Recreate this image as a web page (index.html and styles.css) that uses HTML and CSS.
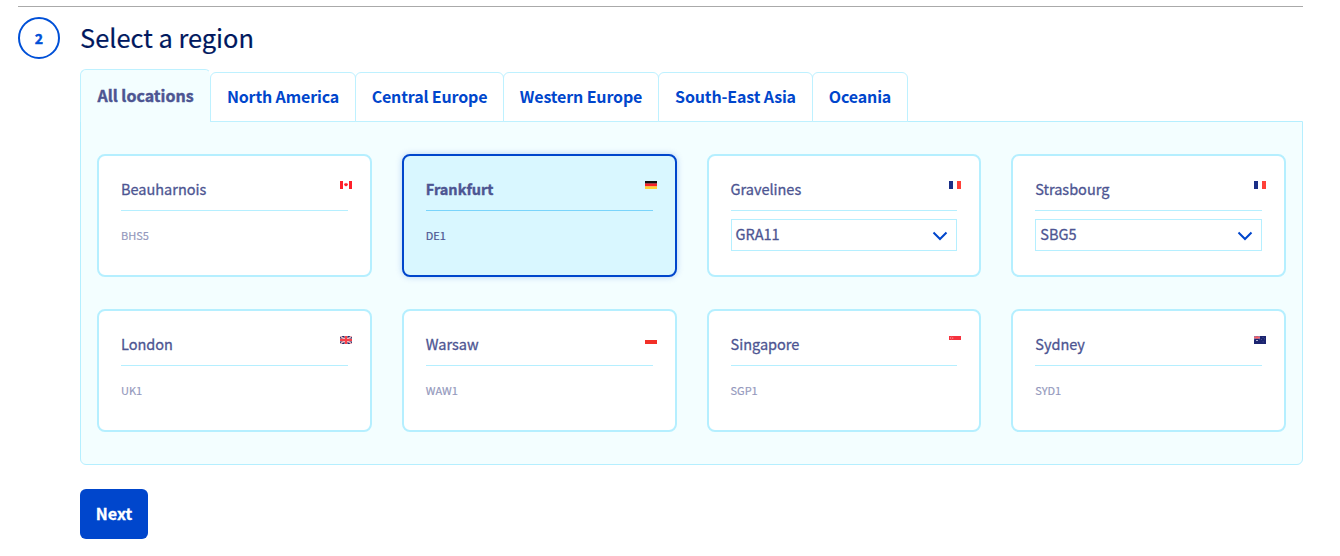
FILE: index.html
```
<!DOCTYPE html>
<html lang="en">
<head>
<meta charset="utf-8">
<title>Select a region</title>
<link rel="stylesheet" href="styles.css">
</head>
<body>
<main class="step">
  <div class="step-number">2</div>
  <section class="step-body">
    <h2 class="title"><span>Select a region</span></h2>
    <nav class="tabs">
      <a class="tab tab-all active"><span>All locations</span></a>
      <a class="tab tab-na"><span>North America</span></a>
      <a class="tab tab-ce"><span>Central Europe</span></a>
      <a class="tab tab-we"><span>Western Europe</span></a>
      <a class="tab tab-sea"><span>South-East Asia</span></a>
      <a class="tab tab-oc"><span>Oceania</span></a>
    </nav>
    <div class="panel">
      <article class="card">
        <header class="card-head"><span class="name">Beauharnois</span>
          <svg class="flag" viewBox="0 0 12 8"><path fill="#fff" d="M0 0h12v8H0z"/><path fill="#ff1f2a" d="M0 0h3v8H0zM9 0h3v8H9zM6 1.800l.7.8 1.300.1-.3 1.500-1.300 1h-.8l-1.300-1L4 2.700l1.300-.1z"/></svg>
        </header>
        <p class="code">BHS5</p>
      </article>
      <article class="card selected">
        <header class="card-head"><span class="name">Frankfurt</span>
          <svg class="flag" viewBox="0 0 12 8"><path fill="#111" d="M0 0h12v2.700H0z"/><path fill="#f8212b" d="M0 2.500h12v3H0z"/><path fill="#ffd034" d="M0 5.300h12V8H0z"/></svg>
        </header>
        <p class="code">DE1</p>
      </article>
      <article class="card">
        <header class="card-head"><span class="name">Gravelines</span>
          <svg class="flag" viewBox="0 0 12 8"><path fill="#fff" d="M0 0h12v8H0z"/><path fill="#1b2f87" d="M0 0h4v8H0z"/><path fill="#ff4038" d="M8 0h4v8H8z"/></svg>
        </header>
        <div class="select"><span>GRA11</span><svg class="chevron" viewBox="0 0 16 10"><path d="M1.500 1.500 8 8l6.500-6.500"/></svg></div>
      </article>
      <article class="card">
        <header class="card-head"><span class="name">Strasbourg</span>
          <svg class="flag" viewBox="0 0 12 8"><path fill="#fff" d="M0 0h12v8H0z"/><path fill="#1b2f87" d="M0 0h4v8H0z"/><path fill="#ff4038" d="M8 0h4v8H8z"/></svg>
        </header>
        <div class="select"><span>SBG5</span><svg class="chevron" viewBox="0 0 16 10"><path d="M1.500 1.500 8 8l6.500-6.500"/></svg></div>
      </article>
      <article class="card">
        <header class="card-head"><span class="name">London</span>
          <svg class="flag" viewBox="0 0 12 8"><path fill="#1b2a68" d="M0 0h12v8H0z"/><path stroke="#fff" stroke-width="1.300" d="m0 0 12 8M12 0 0 8"/><path stroke="#f0444e" stroke-width=".5" d="m0 0 12 8M12 0 0 8"/><path stroke="#fbb" stroke-width="3" d="M6 0v8M0 4h12"/><path stroke="#f8414b" stroke-width="2" d="M6 0v8M0 4h12"/></svg>
        </header>
        <p class="code">UK1</p>
      </article>
      <article class="card">
        <header class="card-head"><span class="name">Warsaw</span>
          <svg class="flag" viewBox="0 0 12 8"><path fill="#fff" d="M0 0h12v4H0z"/><path fill="#f23028" d="M0 4h12v4H0z"/></svg>
        </header>
        <p class="code">WAW1</p>
      </article>
      <article class="card">
        <header class="card-head"><span class="name">Singapore</span>
          <svg class="flag" viewBox="0 0 12 8"><path fill="#f5323e" d="M0 0h12v4H0z"/><path fill="#fff" d="M0 4h12v4H0z"/><path fill="none" stroke="#fcc" stroke-width=".5" d="M2.300.8a1.300 1.300 0 0 0 0 2.400"/><path fill="#f98b90" d="M3 1.500h1.300v1.200H3z"/></svg>
        </header>
        <p class="code">SGP1</p>
      </article>
      <article class="card">
        <header class="card-head"><span class="name">Sydney</span>
          <svg class="flag" viewBox="0 0 12 8"><path fill="#1b2470" d="M0 0h12v8H0z"/><path stroke="#c9bfd8" stroke-width=".8" d="m0 0 6 3M6 0 0 3"/><path stroke="#f9606a" stroke-width="1.400" d="M3 0v3M0 1.500h6"/><path fill="#d5d8ec" d="M2.200 4h1.600v1H2.200z"/><path fill="#6a70a8" d="M8.600 1h.8v.8h-.8zM7.300 3h.7v.7h-.7zM10 2.600h.7v.7H10zM8.700 5.500h.8v.8h-.8z"/></svg>
        </header>
        <p class="code">SYD1</p>
      </article>
    </div>
    <button class="next"><span>Next</span></button>
  </section>
</main>
</body>
</html>
```
FILE: styles.css
```
* { box-sizing: border-box; }
body {
  margin: 0;
  padding: 6px 37px 0 18px;
  background: #fff;
  color: #4d5592;
  font-family: "Noto Sans CJK JP", "Noto Sans CJK SC", sans-serif;
}
.step {
  display: flex;
  gap: 20px;
  border-top: 1px solid #aaa;
}
.step-number {
  flex: none;
  width: 42px;
  height: 42px;
  margin-top: 10px;
  border: 2px solid #0050d7;
  border-radius: 50%;
  color: #0050d7;
  font-size: 14px;
  font-weight: 700;
  line-height: 38px;
  text-align: center;
  -webkit-text-stroke: .5px;
}
.step-body { flex: 1; }
.title {
  height: 62px;
  margin: 0;
  color: #00185e;
  font-size: 25.4px;
  font-weight: 400;
  line-height: 60px;
  -webkit-text-stroke: .2px;
}
.tabs {
  display: flex;
  align-items: flex-end;
  height: 53px;
}
.tab {
  position: relative;
  height: 50px;
  margin-left: -1px;
  border: 1px solid #bef1ff;
  border-radius: 6px 6px 0 0;
  background: #fff;
  color: #0046cc;
  font-size: 16px;
  font-weight: 700;
  letter-spacing: -.15px;
  line-height: 46px;
  text-align: center;
  white-space: nowrap;
}
.tab.active {
  z-index: 1;
  height: 53px;
  margin-left: 0;
  border-right-color: transparent;
  border-bottom: 0;
  background: #f3feff;
  background-clip: padding-box;
  color: #4d5592;
  letter-spacing: 0;
  line-height: 50px;
  -webkit-text-stroke: .4px;
}
.tab-all { width: 131px; }
.tab-na { width: 146px; }
.tab-ce { width: 149px; }
.tab-we { width: 156px; }
.tab-sea { width: 155px; }
.tab-oc { width: 96px; }
.panel {
  display: grid;
  grid-template-columns: repeat(4, 1fr);
  grid-auto-rows: 123px;
  gap: 32px 30px;
  margin-top: -1px;
  padding: 32px 16px;
  border: 1px solid #b5efff;
  border-radius: 0 0 6px 6px;
  background: #f3feff;
}
.card {
  min-width: 0;
  padding: 16px 22px;
  border: 2px solid #b5efff;
  border-radius: 8px;
  background: #fff;
}
.card.selected {
  border-color: #0046cc;
  background: #d9f7ff;
  box-shadow: 0 0 6px rgba(0, 80, 215, .25);
}
.card-head {
  display: flex;
  justify-content: space-between;
  height: 39px;
  border-bottom: 1px solid #b5efff;
}
.selected .card-head { border-color: #7ad4fb; }
.name {
  font-size: 14.5px;
  font-weight: 400;
  line-height: 34px;
  -webkit-text-stroke: .3px;
}
.selected .name {
  font-weight: 700;
  -webkit-text-stroke: .4px;
}
.flag {
  width: 12px;
  height: 8px;
  margin: 9px -4px 0 0;
}
.code {
  margin: 14px 0 0;
  font-size: 11px;
  line-height: 20px;
  opacity: .6;
  -webkit-text-stroke: .2px;
}
.selected .code { opacity: 1; }
.select {
  display: flex;
  justify-content: space-between;
  height: 32px;
  margin-top: 8px;
  padding: 0 8px 0 4px;
  border: 1px solid #b5efff;
  font-size: 14.5px;
  line-height: 28px;
  -webkit-text-stroke: .3px;
}
.chevron {
  width: 16px;
  height: 10px;
  margin-top: 11px;
  fill: none;
  stroke: #0046cc;
  stroke-width: 2;
  -webkit-text-stroke: 0;
}
.next {
  display: block;
  width: 68px;
  height: 50px;
  margin-top: 24px;
  padding: 0;
  border: 0;
  border-radius: 6px;
  background: #0046cc;
  color: #fff;
  font: 700 16px/48px "Noto Sans CJK JP", "Noto Sans CJK SC", sans-serif;
  -webkit-text-stroke: .3px;
}
.next span {
  display: block;
  height: 50px;
}
```
